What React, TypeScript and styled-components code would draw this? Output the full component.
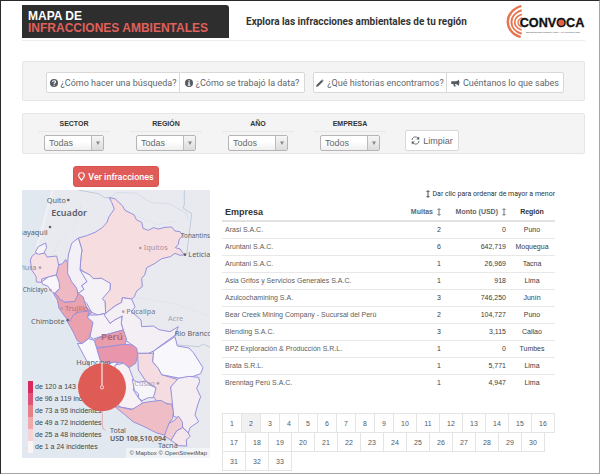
import React from 'react';
import styled, { createGlobalStyle } from 'styled-components';

const GlobalStyle = createGlobalStyle`
  * { box-sizing: border-box; }
  body { margin: 0; background: #fff; }
  body, button, select { font-family: 'Liberation Sans', Arial, sans-serif; }
`;

const Page = styled.div`
  min-height: 100vh;
  padding: 4px 14px 3px 21px;
  border: 1px solid #2b292c;
  border-right-color: #a5a5a5;
  border-bottom: 2px solid #a5a5a5;
  color: #4a4a4a;
  font-size: 8px;
`;

const Header = styled.header`
  display: flex;
  align-items: flex-start;
  height: 36px;
  border-bottom: 1px solid #ececec;
`;

const Brand = styled.h1`
  width: 207px;
  height: 33px;
  margin: 0;
  padding: 5px 6px;
  border-radius: 0 3px 0 0;
  background: #2e2e2e;
  color: #fff;
  font-size: 12px;
  line-height: 12px;
  white-space: nowrap;
`;

const BrandAccent = styled.span`
  display: block;
  color: #e0605b;
`;

const Tagline = styled.p`
  flex: 1;
  margin: 0;
  padding: 11px 0 0 17px;
  color: #333;
  font-family: Roboto, 'Liberation Sans', sans-serif;
  font-size: 10px;
  font-weight: bold;
  line-height: 12px;
  white-space: nowrap;
`;

const Logo = styled.svg`
  display: block;
  width: 80px;
  height: 33px;
`;

const Panel = styled.section`
  display: flex;
  border: 1px solid #e6e6e6;
  border-radius: 2px;
  background: #f4f4f4;
`;

const NavPanel = styled(Panel)`
  gap: 8px;
  height: 40px;
  margin-top: 20px;
  padding: 10px 21px 0 23px;
`;

const FilterPanel = styled(Panel)`
  height: 41px;
  margin-top: 12px;
  padding-left: 5px;
`;

const ButtonGroup = styled.div`
  display: flex;
  height: 21px;
`;

const Button = styled.button`
  display: flex;
  align-items: center;
  justify-content: center;
  gap: 3px;
  height: 21px;
  padding: 0 4px;
  border: 1px solid #d8d8d8;
  border-radius: 2px;
  background: #fff;
  color: #60666c;
  font-family: Roboto, 'Liberation Sans', sans-serif;
  font-size: 9px;
  white-space: nowrap;

  & > svg { flex: none; }
`;

const GroupButton = styled(Button)<{ $width: number }>`
  width: ${({ $width }) => $width}px;

  & + & { margin-left: -1px; border-radius: 0 2px 2px 0; }
  &:first-child { border-radius: 2px 0 0 2px; }
`;

const Filter = styled.div`
  display: flex;
  flex-direction: column;
  align-items: center;
  width: 92px;
  padding: 5px 10px 0;
`;

const FilterLabel = styled.label`
  width: 100%;
  height: 13px;
  border-bottom: 1px solid #e8e8e8;
  color: #333;
  font-size: 7px;
  font-weight: bold;
  line-height: 10px;
  text-align: center;
`;

const SelectBox = styled.div`
  display: grid;
  grid-template-columns: 1fr 12px;
  width: 60px;
  height: 16px;
  margin-top: 3px;
  border: 1px solid #b5b5b5;
  border-radius: 2px;
  background: linear-gradient(#fff 40%, #f0f0f0);
`;

const Select = styled.select`
  grid-area: 1 / 1 / 2 / 3;
  width: 100%;
  padding: 0 4px;
  border: 0;
  background: transparent;
  color: #686868;
  font-size: 9px;
  appearance: none;
`;

const SelectArrow = styled.span`
  display: flex;
  grid-area: 1 / 2 / 2 / 3;
  align-items: center;
  justify-content: center;
  border-left: 1px solid #bbb;
  background: linear-gradient(#f6f6f6, #dcdcdc);
  pointer-events: none;
`;

const ClearButton = styled(Button)`
  width: 54px;
  margin: 16px 0 0 9px;
  font-family: 'Liberation Sans', Arial, sans-serif;
`;

const SearchButton = styled(Button)`
  width: 86px;
  margin: 12px 0 0 51px;
  border-color: #d9534f;
  border-radius: 3px;
  background: #df5c59;
  color: #fff;
  font-weight: 500;
`;

const Content = styled.main`
  display: grid;
  grid-template-columns: 188fr 375fr;
  margin-top: 3px;
`;

const MapFrame = styled.div`
  position: relative;
  height: 268px;
  overflow: hidden;
  background: #e9eaf0;
`;

const MapDrawing = styled.svg`
  display: block;
  width: 100%;
  height: 100%;
  font-family: 'Noto Sans', 'Open Sans', sans-serif;
`;

const MapOverlay = styled(MapDrawing)`
  position: absolute;
  inset: 0;
  pointer-events: none;
`;

const Legend = styled.ul`
  position: absolute;
  bottom: 5px;
  left: 6px;
  margin: 0;
  padding: 0;
  list-style: none;
`;

const LegendItem = styled.li<{ $color: string }>`
  height: 12px;
  padding-left: 2px;
  border-left: 5px solid ${({ $color }) => $color};
  color: #444;
  font-size: 7px;
  line-height: 12px;
`;

const Attribution = styled.div`
  position: absolute;
  right: 0;
  bottom: 0;
  padding: 0 3px;
  background: rgba(255, 255, 255, 0.5);
  font-size: 6px;
  line-height: 10px;
  white-space: nowrap;
`;

const AttributionLink = styled.a`
  color: #4c4c4c;
  text-decoration: none;
`;

const Results = styled.section`
  padding: 0 30px 0 12px;
`;

const Hint = styled.p`
  display: flex;
  align-items: center;
  justify-content: flex-end;
  gap: 2px;
  margin: 0;
  color: #333;
  font-family: Roboto, 'Liberation Sans', sans-serif;
  font-size: 7px;
  line-height: 8px;
`;

const Table = styled.table`
  width: 100%;
  margin-top: 5px;
  border-collapse: collapse;
  table-layout: fixed;
`;

type Align = 'left' | 'center' | 'right';

const HeadCell = styled.th<{ $align: Align; $width?: number }>`
  width: ${({ $width }) => ($width ? `${$width}px` : 'auto')};
  height: 18px;
  padding: 0 3px;
  border-bottom: 2px solid #e2e2e2;
  color: #333;
  font-size: ${({ $align }) => ($align === 'left' ? 9 : 7)}px;
  text-align: ${({ $align }) => $align};
  white-space: nowrap;
`;

const SortButton = styled.button`
  display: inline-flex;
  align-items: center;
  gap: 4px;
  padding: 0;
  border: 0;
  background: none;
  color: #5c6670;
  font-size: 7px;
  font-weight: bold;
`;

const Cell = styled.td<{ $align: Align }>`
  height: 17px;
  padding: 0 3px;
  border-bottom: 1px solid #e8e8e8;
  color: ${({ $align }) => ($align === 'left' ? '#5c5c5c' : '#3c3c3c')};
  font-size: 7px;
  line-height: 10px;
  text-align: ${({ $align }) => $align};
  white-space: nowrap;

  tr:last-child > & { border-bottom: 0; }
`;

const Pagination = styled.nav`
  display: flex;
  flex-wrap: wrap;
  margin: 22px -1px 0 0;
`;

const PageButton = styled.button<{ $current: boolean; $wide: boolean }>`
  width: ${({ $wide }) => ($wide ? 24 : 20)}px;
  height: 20px;
  margin: 0 -1px -1px 0;
  padding: 0;
  border: 1px solid #e4e4e4;
  background: ${({ $current }) => ($current ? '#f1f1f1' : '#fff')};
  color: #555a60;
  font-size: 7px;
`;

const QuestionIcon = () => (
  <svg width="8" height="8" viewBox="0 0 16 16" aria-hidden="true">
    <circle cx="8" cy="8" r="8" fill="#555b61" />
    <path d="M5 6.2C5 2.5 11 2.6 11 6c0 2-2.8 2-2.8 4" fill="none" stroke="#fff" strokeWidth="2.2" />
    <path d="M7 11.4h2.4v2H7z" fill="#fff" />
  </svg>
);

const InfoIcon = () => (
  <svg width="8" height="8" viewBox="0 0 16 16" aria-hidden="true">
    <circle cx="8" cy="8" r="8" fill="#555b61" />
    <path d="M7 2.5h2.5V5H7zM6 6.5h3.5v5H11v2H5.5v-2H7v-3H6z" fill="#fff" />
  </svg>
);

const PencilIcon = () => (
  <svg width="8" height="8" viewBox="0 0 16 16" aria-hidden="true">
    <path d="M0 16l1.5-4.5L11 2l3 3L4.500 14.500zM12 1c1-1 4 2 3 3l-.5.500-3-3z" fill="#555b61" />
  </svg>
);

const BullhornIcon = () => (
  <svg width="9" height="8" viewBox="0 0 18 16" aria-hidden="true">
    <path d="M16 1v13c-3-3-5.500-4-8-4L9.500 15H6L4.500 10H1C0 10 0 4.500 1 4.500h6C10 4.500 13 4 16 1zM17 5h1v4h-1z" fill="#555b61" />
  </svg>
);

const RefreshIcon = () => (
  <svg width="9" height="9" viewBox="0 0 18 18" aria-hidden="true">
    <path d="M2 8C2.500 1 11 0 15 5M16 10c-.5 7-9 8-13 3" fill="none" stroke="#555b61" strokeWidth="1.800" />
    <path d="M16.500 1v6h-6zM1.500 17v-6h6z" fill="#555b61" />
  </svg>
);

const PinIcon = () => (
  <svg width="7" height="9" viewBox="0 0 14 18" aria-hidden="true">
    <path d="M7 1.500c-7 0-6.500 6.500-4 9.500L7 16.500 11 11c2.500-3 3-9.500-4-9.500z" fill="none" stroke="#fff" strokeWidth="2.400" />
  </svg>
);

const SortIcon = () => (
  <svg width="4" height="8" viewBox="0 0 8 16" aria-hidden="true">
    <path d="M4 2v12M1 4l3-3 3 3M1 12l3 3 3-3" fill="none" stroke="currentColor" strokeWidth="1.800" />
  </svg>
);

const CaretIcon = () => (
  <svg width="4" height="4" viewBox="0 0 8 8" aria-hidden="true">
    <path d="M0 1h8L4 8z" fill="#888" />
  </svg>
);

const ConvocaLogo = () => (
  <Logo viewBox="0 0 240 99" role="img" aria-label="Convoca">
    <g fill="none" stroke="#e8734f">
      <path d="M49 3C-5 20-5 80 47 96" strokeWidth="7" />
      <path d="M50 16C9 28 9 74 50 86" strokeWidth="6" />
      <path d="M51 28C22 38 22 66 50 75" strokeWidth="5" />
      <path d="M52 38C35 44 35 60 50 66" strokeWidth="4" />
    </g>
    <text x="44" y="66" fontSize="38" fontWeight="bold" fontFamily="Liberation Sans, Arial, sans-serif" fill="#111" stroke="#111" strokeWidth="1">
      CONVOCA
    </text>
    <circle cx="169" cy="53" r="9" fill="#e8603c" />
    <text x="62" y="84" fontSize="6" fontFamily="Liberation Sans, Arial, sans-serif" fill="#444">
      PERIODISMO DE INVESTIGACIÓN Y ANÁLISIS DE DATOS
    </text>
  </Logo>
);

const MAP_VIEW = '21 15 564 804';

const regions: { name: string; fill: string; points: string }[] = [
  { name: 'Loreto', fill: '#f6dde0', points: '283,38 300,41 322,62 330,76 342,82 358,90 364,104 380,112 384,130 400,136 415,128 430,132 450,127 470,126 480,138 495,140 503,151 492,165 490,178 481,188 496,192 502,203 512,209 495,211 480,205 466,215 440,221 420,235 395,248 389,270 380,280 382,305 365,318 358,335 350,342 322,338 320,352 300,363 272,385 270,350 262,341 273,325 285,315 286,295 270,289 260,280 235,281 225,270 205,260 195,250 198,215 201,195 190,159 215,152 240,142 262,128 276,112 282,95 298,72 290,52' },
  { name: 'Amazonas', fill: '#f3f1f7', points: '190,159 201,195 198,215 195,255 213,270 216,290 200,302 207,313 190,325 180,302 165,290 157,270 158,235 160,210 170,175' },
  { name: 'San Martin', fill: '#f5f2f7', points: '195,255 225,270 235,281 260,280 286,295 285,315 262,341 270,350 272,385 248,390 230,382 215,355 195,335 190,325 207,313 200,302 216,290' },
  { name: 'Cajamarca', fill: '#efb9c4', points: '128,240 143,236 152,223 158,235 158,265 170,290 185,310 190,335 180,349 150,352 136,344 121,325 134,310 130,290 124,270' },
  { name: 'Piura', fill: '#f7e1e4', points: '62,205 90,205 96,216 125,213 131,240 124,270 100,276 80,282 80,292 64,291 63,274 50,255 46,225 52,212' },
  { name: 'Tumbes', fill: '#f5f4f9', points: '61,201 70,185 92,174 95,188 86,205 70,208' },
  { name: 'Lambayeque', fill: '#f8f6fa', points: '80,290 100,276 124,270 132,290 134,310 118,325 108,318 98,303 83,298' },
  { name: 'La Libertad', fill: '#e9a2ae', points: '115,325 121,325 136,344 150,352 180,349 190,325 205,336 208,350 216,370 231,382 221,390 190,382 165,408 152,398 132,370 127,345' },
  { name: 'Ancash', fill: '#eaa1ad', points: '165,408 175,390 190,382 221,378 218,398 234,412 229,440 221,461 201,476 186,466 176,444 166,425 154,405' },
  { name: 'Huanuco', fill: '#f6f1f6', points: '221,390 248,390 268,386 285,415 300,404 322,393 319,415 325,435 270,450 236,462 225,455 234,412 218,398' },
  { name: 'Ucayali', fill: '#f4eff5', points: '300,363 320,352 322,338 350,342 360,365 350,380 378,405 380,425 415,423 432,434 465,440 490,425 480,451 430,487 416,498 400,505 366,505 360,486 331,465 325,435 319,415 322,393 300,404 285,415 268,390 272,385' },
  { name: 'Pasco', fill: '#ea9eac', points: '238,466 270,450 325,435 335,463 330,478 270,486 245,487' },
  { name: 'Junin', fill: '#e995ac', points: '245,490 270,486 330,478 352,480 365,489 368,510 362,535 342,548 326,535 300,531 280,536 256,527' },
  { name: 'Lima', fill: '#f8f8fc', points: '187,475 201,476 221,461 238,466 245,490 256,527 280,536 300,531 322,548 330,640 270,640 238,570' },
  { name: 'Ayacucho', fill: '#f7f1f5', points: '300,540 326,535 342,548 358,590 355,615 370,638 382,653 372,668 350,672 315,666 298,645' },
  { name: 'Cusco', fill: '#f4dce0', points: '368,505 400,505 416,505 413,530 430,550 440,569 466,577 490,584 467,606 473,635 472,660 440,651 425,647 415,635 419,605 394,590 370,555' },
  { name: 'Apurimac', fill: '#f6f5fa', points: '352,583 368,592 394,588 404,600 423,608 420,621 415,638 400,638 381,647 370,638 371,627 358,615' },
  { name: 'Madre de Dios', fill: '#f7f7fc', points: '416,498 480,455 487,483 522,489 535,503 564,548 557,566 535,574 495,580 440,569 430,550 413,530' },
  { name: 'Puno', fill: '#f4edf2', points: '490,580 522,574 551,577 554,590 545,610 557,635 548,660 540,690 551,710 525,728 520,744 504,728 492,700 476,694 470,635 467,606' },
  { name: 'Arequipa', fill: '#efbdc6', points: '300,665 315,666 350,674 385,653 405,650 438,646 456,657 470,657 475,680 473,700 462,715 460,735 448,750 425,744 390,726 354,710 328,688' },
  { name: 'Moquegua', fill: '#f1cbd2', points: '462,715 480,705 490,693 502,711 503,728 485,738 468,766 448,752' },
  { name: 'Tacna', fill: '#f5e6eb', points: '468,766 485,738 503,728 520,744 525,754 514,765 515,783 491,782' },
];

const PeruMap = () => (
  <MapDrawing viewBox={MAP_VIEW} preserveAspectRatio="xMidYMid slice" role="img" aria-label="Mapa de incidentes por región">
    <path d="M0 0H112L87 90l-20 80-21 50 5 48 13 33 35 17 23 38 34 55 31 66 52 94 42 57 75 48 107 58 64 51v104H0z" fill="#e1e8ef" />
    <path d="M118 0L94 83 74 159l-8 24" fill="none" stroke="#eef1f5" strokeWidth="7" />
    <g fill="none" stroke="#a9bdd0" strokeWidth="2">
      <path d="M190 15l32 6 29 5 18 12 16 0M508 15v44l-4 10 26 17-15 122M585 487l-20-10-14 8-63-5" />
      <path d="M285 38l20-15 58 1 45 29 55 3 51 29 6 18" stroke="#cbd3e2" />
    </g>
    <g fill="none" stroke="#d9dce7" strokeWidth="2" strokeDasharray="7 4">
      <path d="M360 336l125 22 100 36M370 95l55 24 62-10M554 640l31-30M557 540l28-23" />
      <path d="M111 210l25-49 42-35 22-70" />
    </g>
    <path d="M490 684l14-17 8 11 6-16 8 19-8 15-11-5z" fill="none" stroke="#e1dfea" strokeWidth="2" />
    <g stroke="#9791dc" strokeWidth="3" strokeLinejoin="round">
      {regions.map((r) => (
        <polygon key={r.name} points={r.points} fill={r.fill} />
      ))}
    </g>
    <g fill="#60646e">
      <circle cx="160" cy="45" r="4" />
      <circle cx="105" cy="126" r="4" />
      <circle cx="158" cy="405" r="4" />
      <circle cx="510" cy="209" r="4" />
    </g>
    <g fill="#b39ba5">
      <circle cx="376" cy="189" r="4" />
      <circle cx="75" cy="248" r="4" />
      <circle cx="106" cy="315" r="4" />
      <circle cx="140" cy="370" r="4" />
      <circle cx="325" cy="380" r="4" />
      <circle cx="429" cy="595" r="4" />
    </g>
    <g fontSize="22" fill="#5a5e69" strokeLinejoin="round">
      <text x="95" y="53">Quito</text>
      <text x="109" y="93" fontSize="27" fontWeight="600">Ecuador</text>
      <text x="98" y="151" textAnchor="end">Guayaquil</text>
      <text x="498" y="160" fontSize="19">Tonantins</text>
      <text x="520" y="216">Leticia</text>
      <text x="386" y="196" fill="#b08f9c">Iquitos</text>
      <text x="64" y="255" textAnchor="end" fill="#8d8b98">Piura</text>
      <text x="98" y="321" textAnchor="end" fontSize="19">Chiclayo</text>
      <text x="150" y="377" fill="#a96f80">Trujillo</text>
      <text x="48" y="416">Chimbote</text>
      <text x="334" y="387" fill="#777987">Pucallpa</text>
      <text x="459" y="408" fill="#a0a3b0">Acre</text>
      <text x="258" y="464" fontSize="29" fontWeight="600" fill="#a96878">Perú</text>
      <text x="479" y="452">Rio Branco</text>
      <text x="184" y="541">Huancayo</text>
      <text x="358" y="602" fill="#b7a4af">Cusco</text>
      <text x="429" y="788">Tacna</text>
    </g>
  </MapDrawing>
);

const TotalMarker = () => (
  <MapOverlay viewBox={MAP_VIEW} preserveAspectRatio="xMidYMid slice">
    <circle cx="261" cy="607" r="72" fill="#df5c56" />
    <path d="M261 533v68" stroke="#f9dcdb" strokeWidth="4" />
    <circle cx="261" cy="607" r="5" fill="none" stroke="#f9dcdb" strokeWidth="3" />
    <path d="M262 680v42q0 12 9 14" fill="none" stroke="#e0908e" strokeWidth="2" />
    <text x="285" y="743" fontSize="21" fill="#555">Total</text>
    <text x="285" y="769" fontSize="21" fontWeight="600" fill="#555">USD 108,510,094</text>
  </MapOverlay>
);

const legend = [
  { color: '#d52c5c', label: 'de 120 a 143 incidentes' },
  { color: '#de5277', label: 'de 96 a 119 incidentes' },
  { color: '#e67f87', label: 'de 73 a 95 incidentes' },
  { color: '#f0a9ad', label: 'de 49 a 72 incidentes' },
  { color: '#f6d3d5', label: 'de 25 a 48 incidentes' },
  { color: '#fbf4f5', label: 'de 1 a 24 incidentes' },
];

const filters = [
  { id: 'sector', label: 'SECTOR', value: 'Todas' },
  { id: 'region', label: 'REGIÓN', value: 'Todas' },
  { id: 'anio', label: 'AÑO', value: 'Todos' },
  { id: 'empresa', label: 'EMPRESA', value: 'Todos' },
];

const rows = [
  ['Arasi S.A.C.', '2', '0', 'Puno'],
  ['Aruntani S.A.C.', '6', '642,719', 'Moquegua'],
  ['Aruntani S.A.C.', '1', '26,969', 'Tacna'],
  ['Asia Grifos y Servicios Generales S.A.C.', '1', '918', 'Lima'],
  ['Azulcochamining S.A.', '3', '746,250', 'Junín'],
  ['Bear Creek Mining Company - Sucursal del Perú', '2', '104,727', 'Puno'],
  ['Blending S.A.C.', '3', '3,115', 'Callao'],
  ['BPZ Exploración & Producción S.R.L.', '1', '0', 'Tumbes'],
  ['Brata S.R.L.', '1', '5,771', 'Lima'],
  ['Brenntag Perú S.A.C.', '1', '4,947', 'Lima'],
];

const pages = Array.from({ length: 33 }, (_, i) => i + 1);

export default function App() {
  const [page, setPage] = React.useState(2);

  return (
    <>
      <GlobalStyle />
      <Page>
        <Header>
          <Brand>
            MAPA DE
            <BrandAccent>INFRACCIONES AMBIENTALES</BrandAccent>
          </Brand>
          <Tagline>Explora las infracciones ambientales de tu región</Tagline>
          <ConvocaLogo />
        </Header>

        <NavPanel>
          <ButtonGroup>
            <GroupButton $width={134}><QuestionIcon />¿Cómo hacer una búsqueda?</GroupButton>
            <GroupButton $width={126}><InfoIcon />¿Cómo se trabajó la data?</GroupButton>
          </ButtonGroup>
          <ButtonGroup>
            <GroupButton $width={134}><PencilIcon />¿Qué historias encontramos?</GroupButton>
            <GroupButton $width={118}><BullhornIcon />Cuéntanos lo que sabes</GroupButton>
          </ButtonGroup>
        </NavPanel>

        <FilterPanel>
          {filters.map((f) => (
            <Filter key={f.id}>
              <FilterLabel htmlFor={f.id}>{f.label}</FilterLabel>
              <SelectBox>
                <Select id={f.id}><option>{f.value}</option></Select>
                <SelectArrow><CaretIcon /></SelectArrow>
              </SelectBox>
            </Filter>
          ))}
          <ClearButton><RefreshIcon />Limpiar</ClearButton>
        </FilterPanel>

        <SearchButton><PinIcon />Ver infracciones</SearchButton>

        <Content>
          <MapFrame>
            <PeruMap />
            <Legend>
              {legend.map((l) => (
                <LegendItem key={l.label} $color={l.color}>{l.label}</LegendItem>
              ))}
            </Legend>
            <TotalMarker />
            <Attribution>
              <AttributionLink href="#mapbox">© Mapbox</AttributionLink>{' '}
              <AttributionLink href="#osm">© OpenStreetMap</AttributionLink>
            </Attribution>
          </MapFrame>

          <Results>
            <Hint><SortIcon />Dar clic para ordenar de mayor a menor</Hint>
            <Table>
              <thead>
                <tr>
                  <HeadCell $align="left">Empresa</HeadCell>
                  <HeadCell $align="right" $width={50}><SortButton>Multas <SortIcon /></SortButton></HeadCell>
                  <HeadCell $align="right" $width={65}><SortButton>Monto (USD) <SortIcon /></SortButton></HeadCell>
                  <HeadCell $align="center" $width={46}>Región</HeadCell>
                </tr>
              </thead>
              <tbody>
                {rows.map(([company, fines, amount, region], i) => (
                  <tr key={i}>
                    <Cell $align="left">{company}</Cell>
                    <Cell $align="right">{fines}</Cell>
                    <Cell $align="right">{amount}</Cell>
                    <Cell $align="center">{region}</Cell>
                  </tr>
                ))}
              </tbody>
            </Table>
            <Pagination aria-label="Páginas">
              {pages.map((n) => (
                <PageButton key={n} $current={n === page} $wide={n > 9} onClick={() => setPage(n)}>{n}</PageButton>
              ))}
            </Pagination>
          </Results>
        </Content>
      </Page>
    </>
  );
}
